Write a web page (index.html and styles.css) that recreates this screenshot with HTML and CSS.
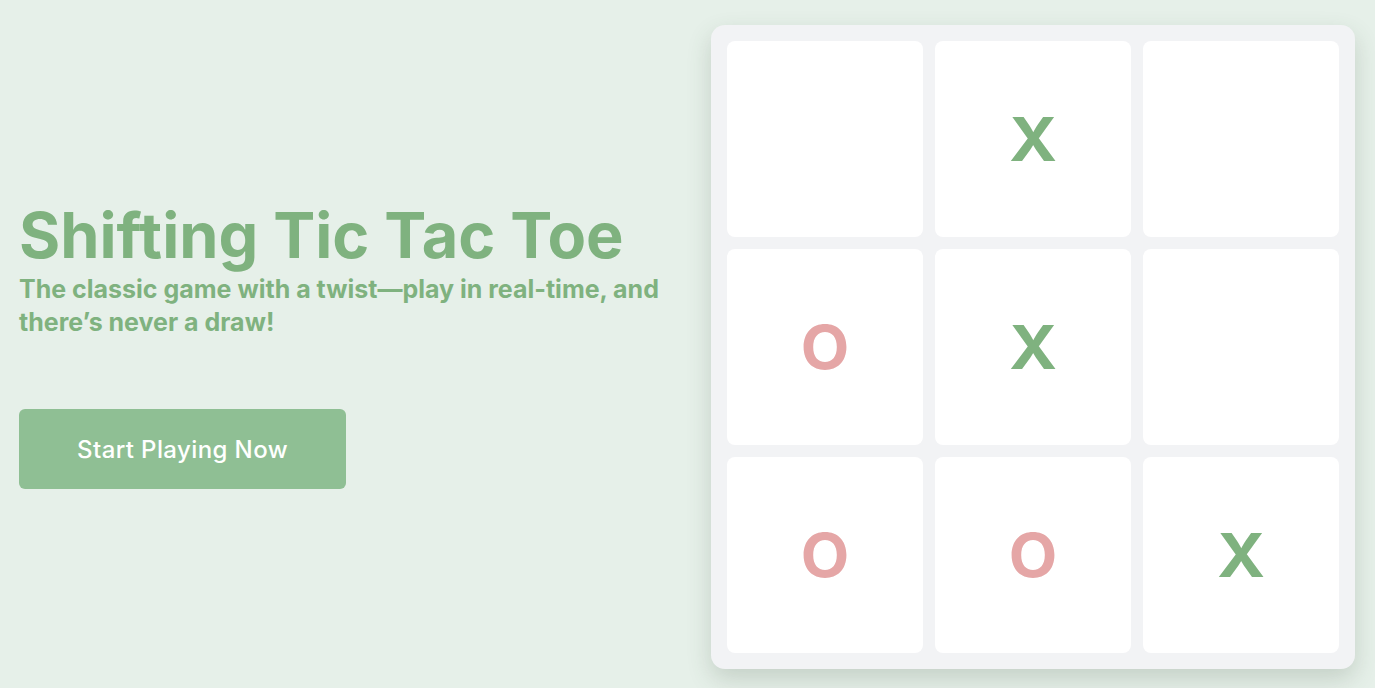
FILE: index.html
```html
<!DOCTYPE html>
<html lang="en">
<head>
<meta charset="utf-8">
<title>Shifting Tic Tac Toe</title>
<link rel="stylesheet" href="styles.css">
</head>
<body>
<main class="page">
  <section class="intro">
    <h1 class="title">Shifting Tic Tac Toe</h1>
    <p class="subtitle">The classic game with a twist—play in real-time, and there’s never a draw!</p>
    <button class="cta">Start Playing Now</button>
  </section>
  <section class="board">
    <div class="cell"></div>
    <div class="cell x"><span class="mark">X</span></div>
    <div class="cell"></div>
    <div class="cell o"><span class="mark">O</span></div>
    <div class="cell x"><span class="mark">X</span></div>
    <div class="cell"></div>
    <div class="cell o"><span class="mark">O</span></div>
    <div class="cell o"><span class="mark">O</span></div>
    <div class="cell x"><span class="mark">X</span></div>
  </section>
</main>
</body>
</html>
```
FILE: styles.css
```css
* { box-sizing: border-box; }
html, body { margin: 0; padding: 0; }
body {
  background: #e6f0e9;
  font-family: Inter, "Open Sans", sans-serif;
  height: 688px;
  overflow: hidden;
}
.page {
  height: 688px;
  display: flex;
  align-items: center;
  justify-content: space-between;
  padding: 6px 20px 0 19px;
}
.intro {
  width: 660px;
  margin-bottom: 8px;
  display: flex;
  flex-direction: column;
  align-items: flex-start;
}
.title {
  margin: 0;
  font-size: 63px;
  font-weight: 700;
  line-height: 76px;
  color: #7fb27f;
}
.subtitle {
  margin: 0 0 70px;
  font-size: 25px;
  font-weight: 700;
  line-height: 33px;
  color: #7fb27f;
}
.cta {
  width: 327px;
  height: 80px;
  border: 0;
  border-radius: 6px;
  background: #8fbf94;
  color: #ffffff;
  font-family: inherit;
  font-size: 24px;
  font-weight: 500;
  letter-spacing: 0.4px;
  cursor: pointer;
}
.board {
  width: 644px;
  height: 644px;
  padding: 16px;
  background: #f2f3f5;
  border-radius: 14px;
  box-shadow: 0 10px 25px rgba(60, 80, 60, 0.2);
  display: grid;
  grid-template-columns: repeat(3, 1fr);
  grid-template-rows: repeat(3, 1fr);
  gap: 12px;
}
.cell {
  background: #ffffff;
  border-radius: 8px;
  display: flex;
  align-items: center;
  justify-content: center;
  font-size: 60px;
  font-weight: 700;
}
.mark { display: inline-block; }
.cell.x { color: #7fb27f; }
.cell.x .mark { transform: scaleX(1.08); }
.cell.o { color: #e5a6a6; }
.cell.o .mark { transform: scaleX(1.05); }
```
